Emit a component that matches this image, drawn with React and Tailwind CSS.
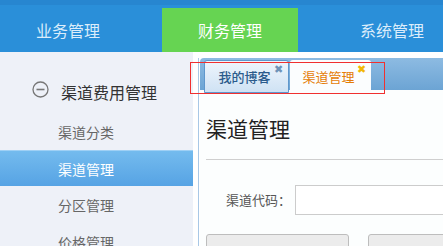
import React from 'react';

const font = { fontFamily: '"Noto Sans CJK SC", "Liberation Sans", sans-serif' };

const App = () => {
  const navItems = [
    { name: '业务管理' },
    { name: '财务管理', active: true },
    { name: '系统管理' },
  ];
  const menu = [
    { name: '渠道分类' },
    { name: '渠道管理', active: true },
    { name: '分区管理' },
    { name: '价格管理' },
  ];

  return (
    <div className="w-[443px] h-[246px] overflow-hidden bg-white" style={font}>
      {/* Top nav */}
      <div className="h-[52px] bg-[#2a8fd9] border-t-[5px] border-t-[#2786d0] flex items-end gap-[26px]">
        {navItems.map((item) => (
          <div
            key={item.name}
            className={`w-[136px] h-[44px] shrink-0 flex items-center justify-center text-[16px] ${
              item.active ? 'bg-[#66d452] text-white' : 'text-[#dcedfb]'
            }`}
          >
            {item.name}
          </div>
        ))}
      </div>

      <div className="flex h-[194px]">
        {/* Sidebar */}
        <div className="w-[193px] shrink-0 bg-[#eef1f8]">
          <div className="h-[61px] flex items-end pb-[13px] pl-[32px] gap-[12px]">
            <svg width="17" height="17" viewBox="0 0 17 17" className="mb-[2px]">
              <circle cx="8.5" cy="8.5" r="7.5" fill="none" stroke="#777" strokeWidth="1.3" />
              <line x1="4.5" y1="8.5" x2="12.5" y2="8.5" stroke="#777" strokeWidth="1.6" />
            </svg>
            <span className="text-[16px] text-[#333] leading-none">渠道费用管理</span>
          </div>
          {menu.map((m) => (
            <div
              key={m.name}
              className={`h-[36.5px] flex items-center pl-[58px] pt-[3px] text-[14px] ${
                m.active
                  ? 'bg-gradient-to-b from-[#74bbee] to-[#56a3e4] border-t border-t-[#9fd0f5] text-white'
                  : 'text-[#666]'
              }`}
            >
              {m.name}
            </div>
          ))}
        </div>

        {/* Content */}
        <div className="flex-1 pl-[5px] pt-[6px]">
          <div className="relative h-full border-l border-[#a9c8e6] pl-[1px]">
            {/* Tab strip */}
            <div className="h-[32px] rounded-tl-[4px] bg-gradient-to-b from-[#8dbbe2] to-[#6ca4d4] flex items-start pl-[4px] pt-[2px] gap-[1px]">
              <div className="relative w-[85px] h-[33px] rounded-t-[3px] border border-[#5f97cc] bg-gradient-to-b from-[#eef5fc] to-[#cfe2f4] flex items-center justify-center pr-[4px] text-[13px] font-medium text-[#2b5b8c]">
                我的博客
                <span className="absolute right-[5px] top-[2px] text-[11px] leading-none text-[#6f93b8]">✖</span>
              </div>
              <div className="relative w-[81px] h-[33px] rounded-t-[3px] bg-[#fbfdfe] flex items-center justify-center pr-[4px] text-[13px] text-[#e57c06]">
                渠道管理
                <span className="absolute right-[5px] top-[3px] text-[11px] leading-none text-[#f2b705]">✖</span>
              </div>
            </div>

            <div className="bg-[#fcfefe] h-full pl-[6px]">
              <div className="pt-[28px] text-[21px] text-[#222] leading-none">渠道管理</div>
              <div className="mt-[20px] border-t border-[#cfcfcf]" />
              <div className="mt-[25px] flex items-center">
                <span className="w-[89px] shrink-0 text-right pr-[4px] text-[13px] text-[#555]">渠道代码：</span>
                <div className="flex-1 h-[30px] border border-[#cccccc] bg-white" />
              </div>
              <div className="mt-[19px] flex gap-[19px]">
                <div className="w-[143px] h-[20px] rounded-t-[3px] border border-[#bdbdbd] bg-[#ececec]" />
                <div className="w-[143px] h-[20px] rounded-t-[3px] border border-[#bdbdbd] bg-[#ececec]" />
              </div>
            </div>

            {/* red outline overlay */}
            <div className="absolute left-[-9px] top-[4px] w-[195px] h-[32px] border border-[#f03030]" />
          </div>
        </div>
      </div>
    </div>
  );
};

export default App;
